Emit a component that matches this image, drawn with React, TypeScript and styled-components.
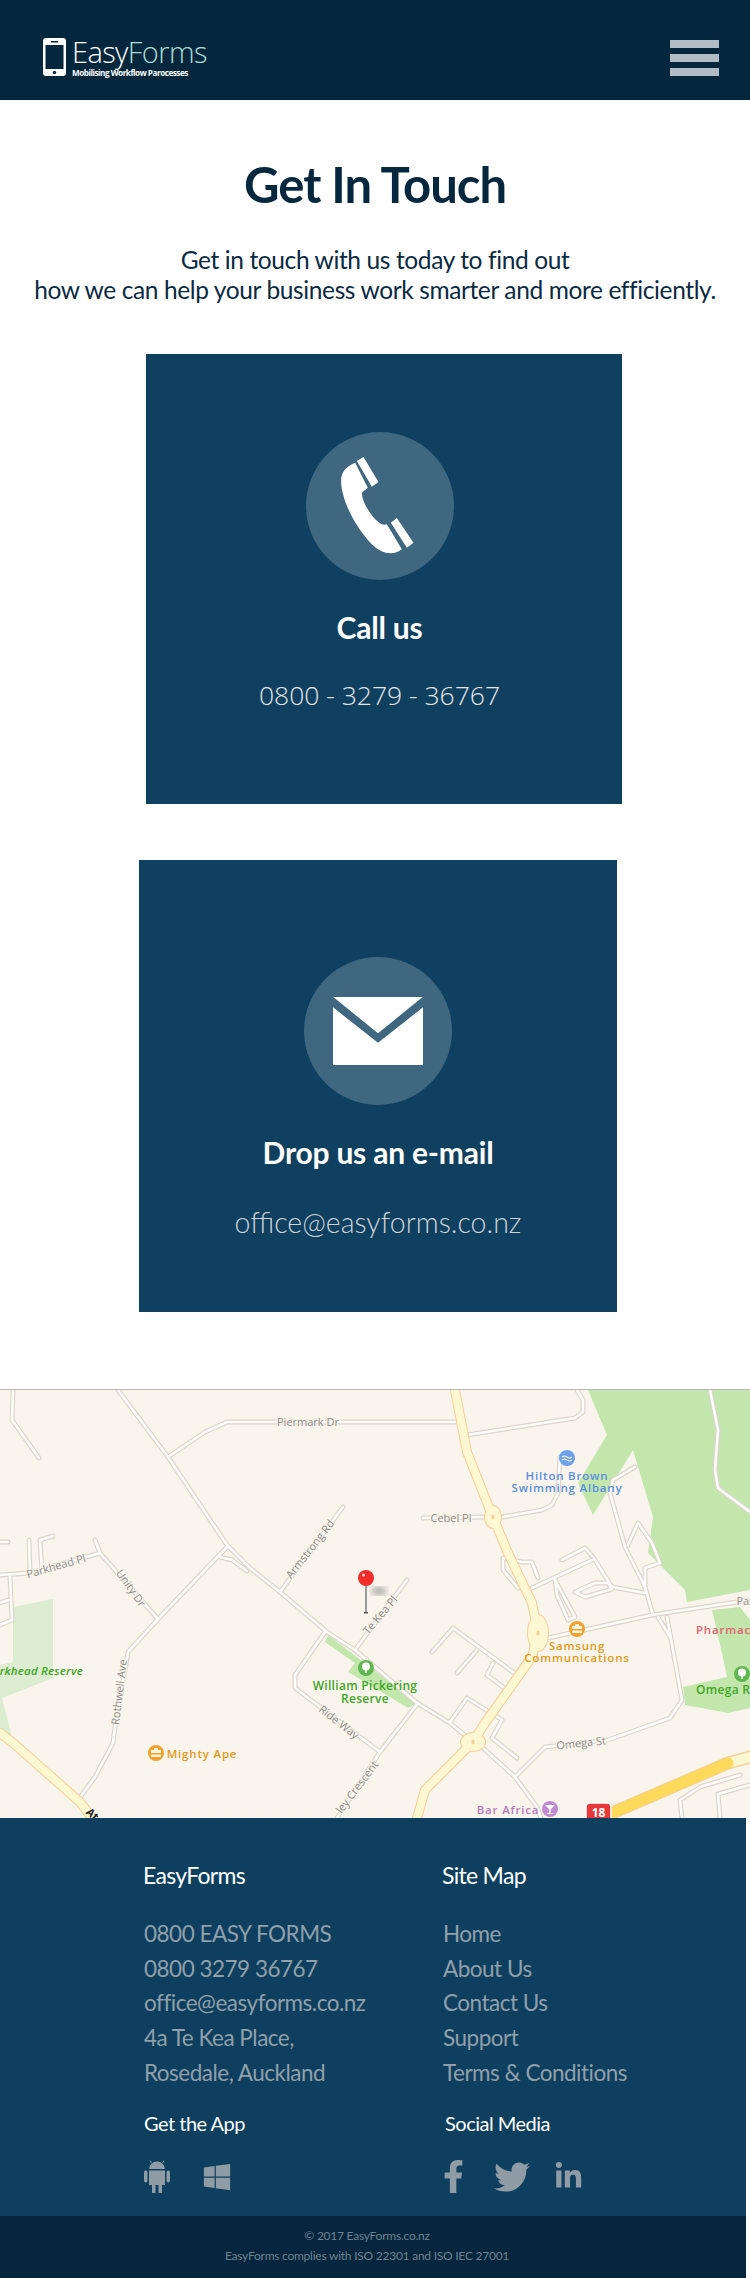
import React from 'react';
import styled, { createGlobalStyle } from 'styled-components';
import { FaFacebookF, FaLinkedinIn, FaTwitter, FaWindows } from 'react-icons/fa';

const GlobalStyle = createGlobalStyle`
  html, body {
    margin: 0;
    padding: 0;
    background: #fff;
  }
  body {
    font-family: "Lato", "Open Sans", sans-serif;
  }
`;

const Page = styled.div`
  width: 750px;
  height: 2278px;
  overflow: hidden;
`;

const Header = styled.header`
  display: flex;
  align-items: center;
  justify-content: space-between;
  box-sizing: border-box;
  height: 100px;
  padding: 0 31px 0 43px;
  background: #04273e;
`;

const Logo = styled.div`
  display: flex;
  align-items: center;
  gap: 6px;
  margin-top: 14px;
`;

const LogoText = styled.div`
  display: flex;
  flex-direction: column;
`;

const Brand = styled.div`
  font-family: "Open Sans", sans-serif;
  font-size: 29px;
  font-weight: 300;
  line-height: 31px;
  letter-spacing: -0.6px;
  color: #fff;

  span {
    color: #a9dcd2;
  }
`;

const Tagline = styled.div`
  font-family: "Open Sans", sans-serif;
  font-size: 8.2px;
  font-weight: 700;
  line-height: 12px;
  letter-spacing: -0.5px;
  color: #fff;
  white-space: nowrap;
`;

const Hamburger = styled.div`
  display: flex;
  flex-direction: column;
  gap: 6px;
  margin-top: 16px;

  span {
    display: block;
    width: 49px;
    height: 8px;
    background: #b1bcc4;
  }
`;

const Intro = styled.section`
  text-align: center;
  color: #0a2a42;
`;

const Title = styled.h1`
  margin: 58px 0 0;
  font-size: 49px;
  line-height: 52px;
  font-weight: 700;
  letter-spacing: -1px;
  color: #06283f;
`;

const Lead = styled.p`
  margin: 35px 0 0;
  font-size: 24.5px;
  line-height: 30px;
  letter-spacing: -0.38px;
`;

const Card = styled.div<{ $left: number; $width: number; $height: number; $top: number; $pad: number; $inset?: number }>`
  display: flex;
  flex-direction: column;
  align-items: center;
  box-sizing: border-box;
  width: ${(p) => p.$width}px;
  height: ${(p) => p.$height}px;
  margin: ${(p) => p.$top}px 0 0 ${(p) => p.$left}px;
  padding: ${(p) => p.$pad}px ${(p) => p.$inset ?? 0}px 0 0;
  background: #10405f;
`;

const Circle = styled.div`
  display: flex;
  align-items: center;
  justify-content: center;
  width: 148px;
  height: 148px;
  border-radius: 50%;
  background: #3f6780;
`;

const CardTitle = styled.h2`
  margin: 27px 0 0;
  font-size: 30px;
  line-height: 40px;
  font-weight: 700;
  letter-spacing: -0.2px;
  color: #fff;
`;

const CardPhone = styled.div`
  margin-top: 28px;
  font-family: "Open Sans", sans-serif;
  font-size: 26.5px;
  line-height: 40px;
  font-weight: 300;
  color: #e2e5e8;
`;

const CardMail = styled.div`
  margin-top: 30px;
  font-size: 28.5px;
  line-height: 40px;
  font-weight: 300;
  color: #ccd3da;
`;

const MapFrame = styled.div`
  margin-top: 77px;
  height: 428px;
  border-top: 1px solid #b9b7b2;
  box-sizing: content-box;
  background: #f9f5ed;

  svg {
    display: block;
  }
`;

const FooterMain = styled.footer`
  box-sizing: border-box;
  width: 746px;
  height: 398px;
  padding: 40px 0 0 144px;
  background: #0f3f5e;
`;

const FooterGrid = styled.div`
  display: grid;
  grid-template-columns: 299px 1fr;
`;

const FooterHeading = styled.h3`
  margin: 0 0 0 -1px;
  font-size: 23px;
  line-height: 34px;
  font-weight: 400;
  letter-spacing: -0.7px;
  color: #fff;
`;

const FooterList = styled.ul`
  margin: 25px 0 0;
  padding: 0;
  list-style: none;

  li {
    font-size: 22.5px;
    line-height: 34.7px;
    letter-spacing: -0.5px;
    color: #8f9fab;
    white-space: nowrap;
  }
`;

const FooterSub = styled.h4<{ $shift?: number }>`
  margin: 17px 0 0 ${(p) => p.$shift ?? 0}px;
  font-size: 20px;
  line-height: 30px;
  font-weight: 400;
  letter-spacing: -0.5px;
  color: #fff;
`;

const IconRow = styled.div`
  display: flex;
  align-items: center;
  height: 36px;
  margin-top: 21px;
  color: #8f9ba5;
`;

const WindowsIcon = styled(FaWindows)`
  width: 30px;
  height: 30px;
  margin-left: 32px;
`;

const FacebookIcon = styled(FaFacebookF)`
  width: 21px;
  height: 33px;
`;

const TwitterIcon = styled(FaTwitter)`
  width: 36px;
  height: 36px;
  margin-left: 30px;
`;

const LinkedinIcon = styled(FaLinkedinIn)`
  width: 29px;
  height: 29px;
  margin-left: 24px;
`;

const BottomBar = styled.div`
  box-sizing: border-box;
  width: 746px;
  height: 63px;
  padding: 10px 12px 0 0;
  background: #05263d;
  text-align: center;
  font-size: 12px;
  line-height: 20px;
  letter-spacing: -0.24px;
  color: #6f8291;
`;

const roads = [
  'M118 0L168 67L227 155L250 178L280 202L327 242L355 260L417 313L450 333L467 347L483 358L515 387L537 417L541 428',
  'M168 67L205 42L227 32L457 32',
  'M13 0L12 30L39 68',
  'M280 202L343 117',
  'M0 185L30 183L100 163L95 150M100 163L157 228',
  'M227 157L160 227L128 262L115 337L113 353L95 387L78 410',
  'M220 167L232 170L247 181',
  'M29 150L30 183M53 146L40 150L42 182M10 187L12 230L0 235M0 152L8 152M0 213L8 210',
  'M325 242L295 285L295 298L380 362',
  'M418 313L380 362L337 428',
  'M355 260L407 190',
  'M432 262L453 238L517 285',
  'M477 260L457 283',
  'M493 273L487 285L507 300',
  'M450 332L467 308L502 330L492 348L517 368',
  'M518 198L503 180L503 168L522 172L532 172L538 188',
  'M532 198L592 170',
  'M562 170L585 158L593 167L612 197L645 203',
  'M555 190L575 227L568 230L557 205L555 190',
  'M575 202L595 193L608 193L612 199L585 207Z',
  'M548 248L652 225L750 210',
  'M610 103L625 157L645 197L653 225',
  'M613 90L635 77',
  'M610 103L613 90',
  'M628 155L638 133L652 153L660 173L645 178L645 200',
  'M658 227L670 247',
  'M667 227L682 310L670 328L608 350L545 357L515 387',
  'M467 45L575 28L583 22L583 10L577 0',
  'M423 128L485 127M502 127L542 120L552 115L558 103L560 67',
  'M710 0L718 40L715 80L718 98L750 122',
  'M720 428L718 404L750 395',
  'M682 428L680 410L700 397L740 385',
];

const majors = [
  'M455 0L467 62L488 115L493 127L508 163L532 213L538 243L532 267L485 333L473 352L425 400L417 428',
  'M0 343L12 352L80 412L92 428',
];

const roundabouts = [
  { x: 493, y: 127, rx: 8, ry: 11 },
  { x: 538, y: 243, rx: 10, ry: 18 },
  { x: 473, y: 352, rx: 12, ry: 9 },
];

function MapArt() {
  return (
    <svg width="750" height="428" viewBox="0 0 750 428" fontFamily="Open Sans, sans-serif">
      <rect width="750" height="428" fill="#f9f5ed" />
      <path d="M13 217L53 209V288L2 308L12 348L0 342V275L13 272Z" fill="#dcecd0" />
      <path d="M588 0L607 45L578 93L593 125L633 60L653 127L648 163L685 200L687 212L750 200V0Z" fill="#c3e6ad" />
      <path d="M712 220L740 217L750 230V318L728 323L685 315L683 297L727 287L722 263Z" fill="#c3e6ad" />
      <path d="M328 245L417 313L408 318L348 282L355 273L325 252Z" fill="#c3e6ad" />
      <g fill="none" strokeLinejoin="round" strokeLinecap="round">
        {roads.map((d) => <path key={d} d={d} stroke="#dcd5ca" strokeWidth="5" />)}
        {roads.map((d) => <path key={`${d}-in`} d={d} stroke="#fdfcfa" strokeWidth="2.6" />)}
        {majors.map((d) => <path key={d} d={d} stroke="#f6cf98" strokeWidth="10" />)}
        <path d="M612 423L728 373L750 367" stroke="#f6cf98" strokeWidth="13" />
        {roundabouts.map((r) => (
          <ellipse key={r.x} cx={r.x} cy={r.y} rx={r.rx + 1} ry={r.ry + 1} fill="#f6cf98" />
        ))}
        {majors.map((d) => <path key={`${d}-in`} d={d} stroke="#fdf7d2" strokeWidth="8" />)}
        <path d="M728 373L750 367" stroke="#fdf7d2" strokeWidth="10" />
        <path d="M612 423L728 373" stroke="#fdd95c" strokeWidth="11" />
      </g>
      {roundabouts.map((r) => (
        <g key={r.x}>
          <ellipse cx={r.x} cy={r.y} rx={r.rx} ry={r.ry} fill="#fdf7d2" />
          <ellipse cx={r.x} cy={r.y} rx="1.500" ry="2.500" fill="#f6cf98" />
        </g>
      ))}
      <g fill="#8c8a86" fontSize="11" stroke="#f9f5ed" strokeWidth="2" paintOrder="stroke" textAnchor="middle">
        <text x="308" y="36">Piermark Dr</text>
        <text x="56" y="180" transform="rotate(-16 56 176)">Parkhead Pl</text>
        <text x="131" y="202" transform="rotate(55 131 198)">Unity Dr</text>
        <text x="119" y="306" transform="rotate(-83 119 302)">Rothwell Ave</text>
        <text x="310" y="163" transform="rotate(-52 310 159)">Armstrong Rd</text>
        <text x="380" y="229" transform="rotate(-50 380 225)">Te Kea Pl</text>
        <text x="339" y="336" transform="rotate(38 339 332)">Ride Way</text>
        <text x="357" y="401" transform="rotate(-53 357 397)">ley Crescent</text>
        <text x="451" y="132">Cebel Pl</text>
        <text x="581" y="357" transform="rotate(-6 581 353)">Omega St</text>
        <text x="745" y="215">Par</text>
      </g>
      <g fontSize="11.5" fontWeight="600" letterSpacing="0.8" textAnchor="middle">
        <g fill="#5a8ee0">
          <text x="567" y="90">Hilton Brown</text>
          <text x="567" y="102">Swimming Albany</text>
        </g>
        <g fill="#e39a1c">
          <text x="577" y="260">Samsung</text>
          <text x="577" y="272">Communications</text>
          <text x="202" y="368">Mighty Ape</text>
        </g>
        <g fill="#3fa524" fontSize="12" letterSpacing="0.3">
          <text x="365" y="300">William Pickering</text>
          <text x="365" y="313">Reserve</text>
        </g>
        <text x="83" y="285" fill="#3fa524" textAnchor="end" fontStyle="italic" letterSpacing="0.2">Parkhead Reserve</text>
        <text x="696" y="244" fill="#e2626f" textAnchor="start">Pharmacy</text>
        <text x="696" y="304" fill="#3fa524" textAnchor="start" fontSize="12" letterSpacing="0.3">Omega Reserve</text>
        <text x="508" y="424" fill="#b67cc0">Bar Africa</text>
      </g>
      <circle cx="567" cy="68" r="8" fill="#6ea1ec" />
      <path d="M562 70q2.500-2 5 0t5 0M562 67q2.500-2 5 0t5 0" stroke="#fff" strokeWidth="1.2" fill="none" />
      {[[577, 239], [156, 363]].map(([x, y]) => (
        <g key={x}>
          <circle cx={x} cy={y} r="8" fill="#f0a22c" />
          <path d={`M${x - 5} ${y - 3}h10v3h-10zM${x - 5} ${y + 1.500}h10v2.500h-10zM${x - 2} ${y - 3}v-2h4v2`} fill="#fdf3dc" />
        </g>
      ))}
      {[[366, 278], [742, 284]].map(([x, y]) => (
        <g key={x}>
          <circle cx={x} cy={y} r="8" fill="#5fb750" />
          <circle cx={x} cy={y - 1.500} r="4" fill="#fff" />
          <rect x={x - 0.800} y={y} width="1.600" height="5" fill="#fff" />
        </g>
      ))}
      <circle cx="550" cy="419" r="8" fill="#c08ad0" />
      <path d="M545 415h10l-5 5zM549.300 419h1.400v4h2v1h-5.400v-1h2z" fill="#fff" />
      <rect x="586" y="413" width="25" height="20" rx="4" fill="#e63a3a" stroke="#fff" strokeWidth="1.500" />
      <text x="598.500" y="427" fontSize="12" fontWeight="700" fill="#fff" textAnchor="middle">18</text>
      <text x="88" y="424" fontSize="11" fontWeight="700" fill="#222" transform="rotate(42 88 420)">At</text>
      <defs>
        <filter id="pin-shadow"><feGaussianBlur stdDeviation="3" /></filter>
      </defs>
      <ellipse cx="379" cy="201" rx="8" ry="4" fill="#7d7b78" opacity="0.65" filter="url(#pin-shadow)" />
      <rect x="365" y="192" width="2" height="31" fill="#9a9ba0" />
      <rect x="364" y="222" width="4" height="1.500" fill="#55565a" />
      <circle cx="366" cy="188" r="8" fill="#f22b2b" />
      <circle cx="363.500" cy="185" r="1.500" fill="#ffd2d2" />
    </svg>
  );
}

function PhoneLogo() {
  return (
    <svg width="23" height="38" viewBox="0 0 23 38">
      <rect width="23" height="38" rx="3" fill="#fff" />
      <rect x="2.500" y="7" width="18" height="24" fill="#04273e" />
      <rect x="8" y="3" width="7" height="1.500" fill="#04273e" />
      <circle cx="11.500" cy="34.500" r="1.700" fill="#04273e" />
    </svg>
  );
}

function Handset() {
  return (
    <svg width="77" height="100" viewBox="638 345 230 300" fill="#fff">
      <path d="M680 365C650 378 636 395 638 425C640 465 665 540 730 610C760 640 795 645 820 625L775 550C750 562 700 490 700 455L718 440Z" />
      <path d="M685 360L705 348L750 423L730 437Z" />
      <path d="M787 545L805 531L855 605L835 620Z" />
    </svg>
  );
}

function Envelope() {
  return (
    <svg width="90" height="68" viewBox="609 447 270 204" fill="#fff">
      <path d="M610 447H878L744 556Z" />
      <path d="M609 478L744 584L879 478V651H609Z" />
    </svg>
  );
}

function AndroidIcon() {
  return (
    <svg width="26" height="33" viewBox="0 0 26 33" fill="currentColor">
      <path d="M5 9a8 7.500 0 0 1 16 0Z" />
      <path d="M7.500 3L6 .500M18.500 3L20 .500" stroke="currentColor" strokeWidth="1" />
      <path d="M5 10.500H21V25H18V33H14.500V25H11.500V33H8V25H5Z" />
      <rect x="0" y="10.500" width="3.500" height="12" rx="1.700" />
      <rect x="22.500" y="10.500" width="3.500" height="12" rx="1.700" />
    </svg>
  );
}

export default function App() {
  return (
    <Page>
      <GlobalStyle />
      <Header>
        <Logo>
          <PhoneLogo />
          <LogoText>
            <Brand>Easy<span>Forms</span></Brand>
            <Tagline>Mobilising Workflow Parocesses</Tagline>
          </LogoText>
        </Logo>
        <Hamburger><span /><span /><span /></Hamburger>
      </Header>

      <Intro>
        <Title>Get In Touch</Title>
        <Lead>
          Get in touch with us today to find out
          <br />
          how we can help your business work smarter and more efficiently.
        </Lead>
      </Intro>

      <Card $left={146} $width={476} $height={450} $top={49} $pad={78} $inset={9}>
        <Circle><Handset /></Circle>
        <CardTitle>Call us</CardTitle>
        <CardPhone>0800 - 3279 - 36767</CardPhone>
      </Card>

      <Card $left={139} $width={478} $height={452} $top={56} $pad={97}>
        <Circle><Envelope /></Circle>
        <CardTitle>Drop us an e-mail</CardTitle>
        <CardMail>office@easyforms.co.nz</CardMail>
      </Card>

      <MapFrame><MapArt /></MapFrame>

      <FooterMain>
        <FooterGrid>
          <div>
            <FooterHeading>EasyForms</FooterHeading>
            <FooterList>
              <li>0800 EASY FORMS</li>
              <li>0800 3279 36767</li>
              <li>office@easyforms.co.nz</li>
              <li>4a Te Kea Place,</li>
              <li>Rosedale, Auckland</li>
            </FooterList>
            <FooterSub>Get the App</FooterSub>
            <IconRow>
              <AndroidIcon />
              <WindowsIcon />
            </IconRow>
          </div>
          <div>
            <FooterHeading>Site Map</FooterHeading>
            <FooterList>
              <li>Home</li>
              <li>About Us</li>
              <li>Contact Us</li>
              <li>Support</li>
              <li>Terms &amp; Conditions</li>
            </FooterList>
            <FooterSub $shift={2}>Social Media</FooterSub>
            <IconRow>
              <FacebookIcon />
              <TwitterIcon />
              <LinkedinIcon />
            </IconRow>
          </div>
        </FooterGrid>
      </FooterMain>
      <BottomBar>
        © 2017 EasyForms.co.nz
        <br />
        EasyForms complies with ISO 22301 and ISO IEC 27001
      </BottomBar>
    </Page>
  );
}
